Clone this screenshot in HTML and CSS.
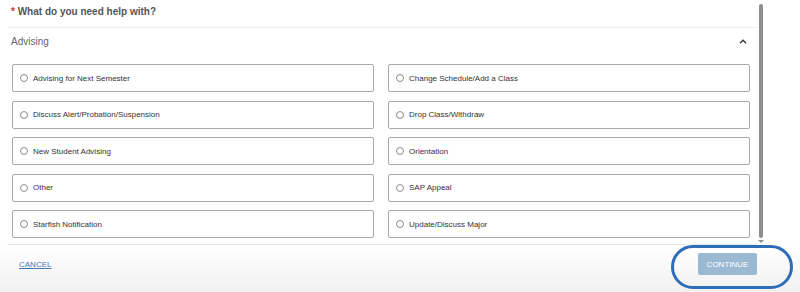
FILE: index.html
```html
<!DOCTYPE html>
<html>
<head>
<meta charset="utf-8">
<link rel="stylesheet" href="styles.css">
</head>
<body>
<div class="page">
  <div class="content">
    <div class="title"><span class="req">*</span> What do you need help with?</div>
    <div class="section-head">
      <span>Advising</span>
      <svg class="chev" width="8" height="5" viewBox="0 0 8 5"><polyline points="1,4.2 4,1.2 7,4.2" fill="none" stroke="#333" stroke-width="1.4"/></svg>
    </div>
    <div class="grid">
      <label class="opt"><span class="radio"></span>Advising for Next Semester</label>
      <label class="opt"><span class="radio"></span>Change Schedule/Add a Class</label>
      <label class="opt"><span class="radio"></span>Discuss Alert/Probation/Suspension</label>
      <label class="opt"><span class="radio"></span>Drop Class/Withdraw</label>
      <label class="opt"><span class="radio"></span>New Student Advising</label>
      <label class="opt"><span class="radio"></span>Orientation</label>
      <label class="opt"><span class="radio"></span>Other</label>
      <label class="opt"><span class="radio"></span>SAP Appeal</label>
      <label class="opt"><span class="radio"></span>Starfish Notification</label>
      <label class="opt"><span class="radio"></span>Update/Discuss Major</label>
    </div>
    <div class="footer">
      <a class="cancel" href="#">CANCEL</a>
      <button class="continue">CONTINUE</button>
    </div>
  </div>
  <div class="scrollbar"></div>
  <div class="scroll-arrow"></div>
  <div class="annot"></div>
</div>
</body>
</html>
```

FILE: styles.css
```css
html, body {
  margin: 0;
  padding: 0;
}
body {
  font-family: "Liberation Sans", Arial, sans-serif;
  background: #fff;
}
.page {
  position: relative;
  width: 800px;
  height: 292px;
  overflow: hidden;
  background: linear-gradient(to bottom, #ffffff 0px, #ffffff 245px, #f1f1f1 292px);
}
.content {
  margin-left: 8px;
  width: 749px;
}
.title {
  height: 21px;
  padding: 6px 0 0 3px;
  font-size: 10px;
  line-height: 12px;
  font-weight: bold;
  color: #555;
  border-bottom: 1px solid #eeeeee;
}
.req {
  color: #c0392b;
}
.section-head {
  display: flex;
  align-items: center;
  justify-content: space-between;
  height: 12px;
  padding: 8px 10px 16px 3px;
  font-size: 10px;
  line-height: 12px;
  color: #666;
}
.chev {
  display: block;
  margin-top: -1px;
}
.grid {
  display: grid;
  grid-template-columns: 362px 362px;
  column-gap: 14px;
  row-gap: 8.5px;
  padding: 0 0 6px 4px;
  border-bottom: 1px solid #e8e8e8;
}
.opt {
  box-sizing: border-box;
  height: 28px;
  display: flex;
  align-items: center;
  padding-left: 7px;
  border: 1px solid #a9a9a9;
  border-radius: 2px;
  font-size: 8px;
  color: #333;
  background: #fff;
}
.radio {
  box-sizing: border-box;
  width: 8px;
  height: 8px;
  border: 1px solid #8c8c8c;
  border-radius: 50%;
  margin-right: 5px;
  flex: none;
}
.footer {
  display: flex;
  align-items: center;
  justify-content: space-between;
  padding: 8px 0 0 11px;
  height: 22px;
}
.cancel {
  font-size: 8px;
  color: #4a78b0;
  text-decoration: underline;
}
.continue {
  width: 59px;
  height: 22px;
  border: none;
  border-radius: 2px;
  background: #9cb9d3;
  color: #fff;
  font-family: "Liberation Sans", Arial, sans-serif;
  font-size: 8px;
  padding: 0;
}
.scrollbar {
  position: absolute;
  left: 759px;
  top: 4px;
  width: 4px;
  height: 234px;
  border-radius: 2px;
  background: #8e8e8e;
}
.scroll-arrow {
  position: absolute;
  left: 758px;
  top: 240px;
  width: 0;
  height: 0;
  border-left: 3px solid transparent;
  border-right: 3px solid transparent;
  border-top: 3px solid #8e8e8e;
}
.annot {
  position: absolute;
  left: 671px;
  top: 245px;
  width: 116px;
  height: 38px;
  border: 3px solid #2f6db8;
  border-radius: 22px;
}
```
